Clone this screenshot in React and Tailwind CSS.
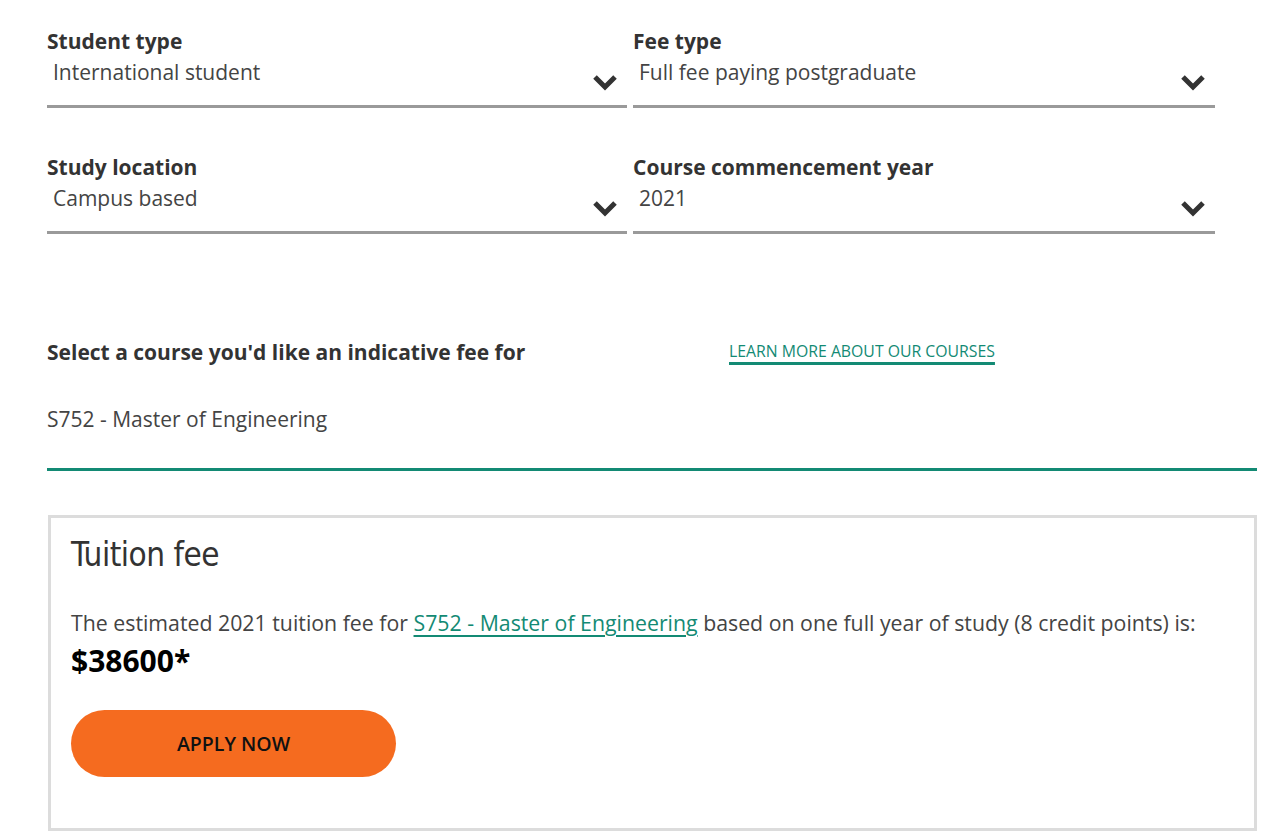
import React from "react";

function Chevron() {
  return (
    <svg width="26" height="18" viewBox="0 0 26 18" className="absolute right-[9px] top-[16px]">
      <path d="M3 3 L13 13 L23 3" fill="none" stroke="#333" strokeWidth="5" strokeLinecap="butt" strokeLinejoin="miter" />
    </svg>
  );
}

function Field({ label, value }) {
  return (
    <div className="flex flex-col border-b-[3px] border-[#9a9a9a] pb-[19px]">
      <div className="text-[21px] leading-[26px] font-bold text-[#333]">{label}</div>
      <div className="relative mt-[4px] pl-[6px] text-[21px] leading-[28px] text-[#444]">
        {value}
        <Chevron />
      </div>
    </div>
  );
}

export default function App() {
  return (
    <div
      className="w-[1280px] h-[840px] bg-white overflow-hidden pl-[47px] pt-[28px]"
      style={{ fontFamily: '"Open Sans", "Liberation Sans", sans-serif' }}
    >
      <div className="grid grid-cols-[580px_582px] gap-x-[6px] gap-y-[46px] w-[1168px]">
        <Field label="Student type" value="International student" />
        <Field label="Fee type" value="Full fee paying postgraduate" />
        <Field label="Study location" value="Campus based" />
        <Field label="Course commencement year" value="2021" />
      </div>

      <div className="flex items-start mt-[104px]">
        <div className="w-[682px] text-[21px] leading-[28px] font-bold text-[#333]">
          Select a course you'd like an indicative fee for
        </div>
        <a className="text-[15.8px] leading-[22px] text-[#138a74] uppercase underline decoration-[3px] underline-offset-[5px] mt-[2px]">
          Learn more about our courses
        </a>
      </div>

      <div className="mt-[39px] text-[21px] leading-[28px] text-[#444]">S752 - Master of Engineering</div>
      <div className="mt-[35px] w-[1210px] h-[3px] bg-[#138a74]" />

      <div className="mt-[44px] ml-[1px] w-[1209px] h-[316px] border-[3px] border-[#dcdcdc] pl-[20px] pt-[17px]">
        <div
          className="text-[33px] leading-[40px] text-[#333] tracking-[-0.5px]"
          style={{ fontFamily: '"DejaVu Sans Condensed", "Liberation Sans", sans-serif', fontWeight: 300 }}
        >
          Tuition fee
        </div>
        <p className="mt-[33px] text-[21.3px] leading-[30px] text-[#444]">
          The estimated 2021 tuition fee for{" "}
          <a className="text-[#138a74] underline decoration-[2px] underline-offset-[4px]">S752 - Master of Engineering</a>{" "}
          based on one full year of study (8 credit points) is:
        </p>
        <div className="mt-[5px] text-[30px] leading-[36px] font-bold text-black">$38600*</div>
        <button className="mt-[31px] w-[325px] h-[67px] rounded-full bg-[#f56b1f] text-[19.5px] font-semibold text-[#111] flex items-center justify-center">
          APPLY NOW
        </button>
      </div>
    </div>
  );
}
